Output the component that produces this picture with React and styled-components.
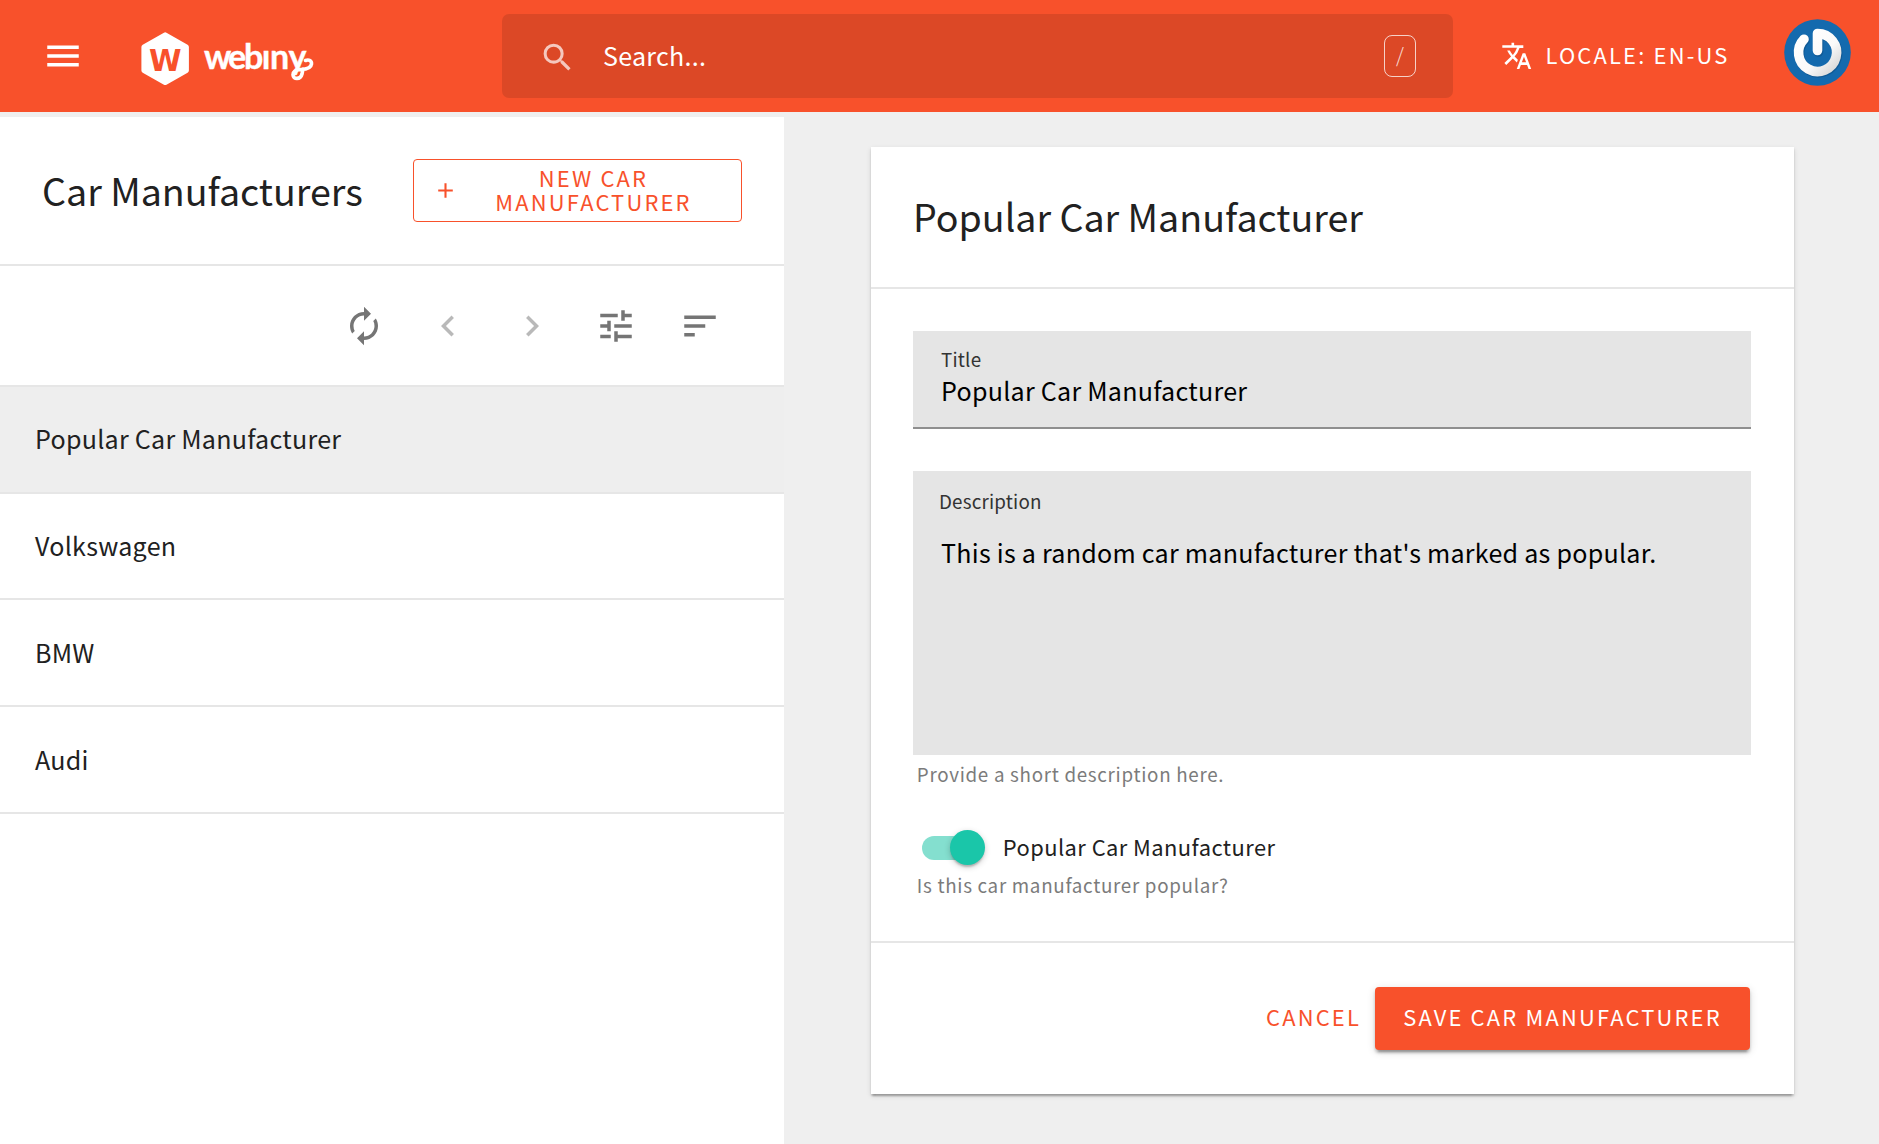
import React from "react";
import styled, { createGlobalStyle, css } from "styled-components";
import {
  MdMenu,
  MdSearch,
  MdTranslate,
  MdAdd,
  MdAutorenew,
  MdChevronLeft,
  MdChevronRight,
  MdTune,
  MdSort,
} from "react-icons/md";

const color = {
  primary: "#f8512b",
  secondary: "#1ac6a9",
  surface: "#ffffff",
  background: "#efefef",
  field: "#e5e5e5",
  line: "#e6e6e6",
  text: "#212121",
  hint: "#7b7b7b",
  icon: "#757575",
};

const GlobalStyle = createGlobalStyle`
  *, *::before, *::after { box-sizing: border-box; }
  body {
    margin: 0;
    background: ${color.background};
    color: ${color.text};
    font-family: "Noto Sans CJK SC", "Noto Sans", sans-serif;
    font-size: 25.07px;
    line-height: 36px;
  }
  svg { display: block; flex: none; }
`;

const buttonText = css`
  font-family: inherit;
  font-size: 21.9px;
  line-height: 24px;
  letter-spacing: 2.19px;
  text-transform: uppercase;
`;

const Page = styled.div`
  height: 1144px;
  display: flex;
  flex-direction: column;
  overflow: hidden;
`;

const TopBar = styled.header`
  flex: none;
  height: 112px;
  display: flex;
  align-items: center;
  padding: 0 28px 0 42px;
  background: ${color.primary};
  color: #fff;
`;

const LogoBox = styled.div`
  width: 180px;
  margin-left: 56px;
`;

const SearchBox = styled.div`
  width: 951px;
  flex: none;
  height: 84px;
  margin-left: 182px;
  padding: 0 37px;
  display: flex;
  align-items: center;
  border-radius: 7px;
  background: rgba(0, 0, 0, 0.108);
`;

const SearchIcon = styled(MdSearch)`
  margin-top: 2px;
  color: rgba(255, 255, 255, 0.7);
`;

const SearchText = styled.span`
  flex: 1;
  margin-left: 27px;
  padding-bottom: 2px;
  letter-spacing: 0.26px;
`;

const KeyHint = styled.span`
  width: 32px;
  height: 42px;
  display: flex;
  align-items: center;
  justify-content: center;
  border: 1px solid rgba(255, 255, 255, 0.75);
  border-radius: 8px;
  color: rgba(255, 255, 255, 0.8);
  font-size: 20px;
  font-weight: 300;
  line-height: 38px;
  padding-bottom: 3px;
`;

const Locale = styled.div`
  ${buttonText}
  display: flex;
  align-items: center;
  width: 283px;
  margin-left: 48px;
  gap: 13px;

  span {
    padding-bottom: 3px;
    white-space: nowrap;
  }
`;

const AvatarBox = styled.div`
  margin-bottom: 7px;
`;

const Workspace = styled.main`
  flex: 1;
  display: flex;
  padding-top: 5px;
`;

const ListPanel = styled.section`
  width: 784px;
  background: ${color.surface};
`;

const ListHeader = styled.div`
  height: 149px;
  padding: 0 42px;
  display: flex;
  align-items: center;
  justify-content: space-between;
  border-bottom: 2px solid ${color.line};
`;

const Heading = styled.h1`
  margin: 0;
  padding-bottom: ${(p) => p.$lift}px;
  font-size: 37.6px;
  font-weight: 400;
  line-height: 56px;
  white-space: nowrap;
`;

const NewButton = styled.button`
  ${buttonText}
  width: 329px;
  height: 63px;
  padding: 0 24px 0 19px;
  display: flex;
  align-items: center;
  border: 1px solid ${color.primary};
  border-radius: 4px;
  background: transparent;
  color: ${color.primary};

  span {
    flex: 1;
    padding: 0 0 1px 12px;
    text-align: center;
  }
`;

const Toolbar = styled.div`
  height: 120.9px;
  padding: 1px 63px 0 0;
  display: flex;
  align-items: center;
  justify-content: flex-end;
  gap: 42px;
  border-bottom: 2px solid ${color.line};
`;

const ToolButton = styled.span`
  color: ${color.icon};
  opacity: ${(p) => (p.$disabled ? 0.5 : 1)};
`;

const List = styled.ul`
  margin: 0;
  padding: 0;
  list-style: none;
`;

const ListItem = styled.li`
  height: 106.75px;
  padding: 0 35px 1.8px;
  display: flex;
  align-items: center;
  border-bottom: 2px solid ${color.line};
  background: ${(p) => (p.$selected ? "#eeeeee" : "transparent")};
  letter-spacing: 0.26px;
`;

const DetailPanel = styled.section`
  flex: 1;
  padding: 30px 85px 0 87px;
`;

const Card = styled.article`
  height: 947px;
  display: flex;
  flex-direction: column;
  background: ${color.surface};
  box-shadow:
    0 3.5px 1.75px -1.75px rgba(0, 0, 0, 0.2),
    0 1.75px 1.75px 0 rgba(0, 0, 0, 0.14),
    0 1.75px 5.25px 0 rgba(0, 0, 0, 0.12);
`;

const CardHeader = styled.div`
  height: 142px;
  padding: 0 42px;
  display: flex;
  align-items: center;
  border-bottom: 2px solid ${color.line};
`;

const CardBody = styled.div`
  flex: 1;
  padding: 42px 43px 0 42px;
`;

const CardFooter = styled.div`
  height: 153px;
  padding: 0 44px;
  display: flex;
  align-items: center;
  justify-content: flex-end;
  border-top: 2px solid ${color.line};
`;

const TextField = styled.div`
  height: 98px;
  padding: 16px 28px 0;
  background: ${color.field};
  border-bottom: 2px solid #8f8f8f;
`;

const TextArea = styled.div`
  height: 284px;
  margin-top: 42px;
  padding: 17.5px 28px 0;
  background: ${color.field};
`;

const FieldLabel = styled.div`
  margin: 0 0 ${(p) => p.$gap}px ${(p) => p.$shift || 0}px;
  font-size: 18.8px;
  line-height: 24px;
  letter-spacing: ${(p) => p.$tracking}px;
  color: #333;
`;

const FieldValue = styled.div`
  color: #000;
  letter-spacing: 0.26px;
  white-space: nowrap;
`;

const HelperText = styled.div`
  margin-top: ${(p) => p.$top}px;
  padding-left: 3.8px;
  font-size: 18.8px;
  line-height: 24px;
  letter-spacing: 0.7px;
  color: ${color.hint};
`;

const SwitchRow = styled.div`
  height: 35px;
  margin-top: 44px;
  padding-left: 9px;
  display: flex;
  align-items: center;
  font-size: 21.9px;
  line-height: 28px;
  letter-spacing: 0.44px;

  span {
    margin-left: 17.8px;
    padding-bottom: 1px;
  }
`;

const SwitchTrack = styled.div`
  width: 63px;
  height: 24px;
  display: flex;
  align-items: center;
  justify-content: flex-end;
  border-radius: 12px;
  background: linear-gradient(90deg, #84dfcf 56px, transparent 56px);
`;

const SwitchThumb = styled.div`
  width: 35px;
  height: 35px;
  flex: none;
  border-radius: 50%;
  background: ${color.secondary};
  box-shadow:
    0 3px 2px -1px rgba(0, 0, 0, 0.2),
    0 2px 6px 0 rgba(0, 0, 0, 0.2);
`;

const TextButton = styled.button`
  ${buttonText}
  height: 63px;
  padding: 0 14px 4px;
  border: 0;
  background: transparent;
  color: ${color.primary};
`;

const SaveButton = styled.button`
  ${buttonText}
  width: 375px;
  height: 63px;
  padding: 0 0 4px;
  border: 0;
  border-radius: 4px;
  background: ${color.primary};
  color: #fff;
  white-space: nowrap;
  box-shadow:
    0 5px 2px -3px rgba(0, 0, 0, 0.2),
    0 3px 3px 0 rgba(0, 0, 0, 0.2),
    0 2px 8px 0 rgba(0, 0, 0, 0.14);
`;

function Logo() {
  return (
    <svg width="180" height="60" viewBox="140 26 180 60" fill="#fff">
      <path
        d="M165.2 35 L186.300 47 V70.600 L165.2 82.500 L144 70.600 V47 Z"
        stroke="#fff"
        strokeWidth="5.2"
        strokeLinejoin="round"
      />
      <text
        x="165.2"
        y="71"
        textAnchor="middle"
        fontFamily="DejaVu Sans"
        fontWeight="700"
        fontSize="29.500"
        fill={color.primary}
      >
        W
      </text>
      <text
        x="204 228 244 261.800 270 288.500"
        y="69"
        fontFamily="Lato"
        fontWeight="700"
        fontSize="34"
        stroke="#fff"
        strokeWidth="0.400"
      >
        webıny
      </text>
      <path
        d="M305.500 60.500 C309 59 311.800 61 311.500 64 C311 68.500 306 69.300 301 69.500 C296 69.700 293 71 293 74.800 C293 79.500 300.500 80 302 74 L303 69"
        fill="none"
        stroke="#fff"
        strokeWidth="3.600"
        strokeLinecap="round"
      />
    </svg>
  );
}

function Avatar() {
  return (
    <svg width="67" height="67" viewBox="0 0 67 67">
      <defs>
        <linearGradient id="ring" x1="0" y1="0" x2="1" y2="1">
          <stop offset="0" stopColor="#fff" />
          <stop offset="0.6" stopColor="#fafafa" />
          <stop offset="1" stopColor="#d5d5d5" />
        </linearGradient>
      </defs>
      <circle cx="33.500" cy="33.500" r="33.300" fill="#146aae" />
      <path
        d="M20 20.200 A19 19 0 1 0 33.500 14.500 V32"
        transform="translate(0.800 1)"
        fill="none"
        stroke="#0b4679"
        strokeOpacity="0.450"
        strokeWidth="10"
        strokeLinecap="round"
        strokeLinejoin="round"
      />
      <path
        d="M20 20.200 A19 19 0 1 0 33.500 14.500 V31.500"
        fill="none"
        stroke="url(#ring)"
        strokeWidth="9.600"
        strokeLinecap="round"
        strokeLinejoin="round"
      />
    </svg>
  );
}

const manufacturers = ["Popular Car Manufacturer", "Volkswagen", "BMW", "Audi"];

export default function App() {
  return (
    <>
      <GlobalStyle />
      <Page>
        <TopBar>
          <MdMenu size={42} />
          <LogoBox>
            <Logo />
          </LogoBox>
          <SearchBox>
            <SearchIcon size={37} />
            <SearchText>Search...</SearchText>
            <KeyHint>/</KeyHint>
          </SearchBox>
          <Locale>
            <MdTranslate size={31.5} />
            <span>Locale: en-US</span>
          </Locale>
          <AvatarBox>
            <Avatar />
          </AvatarBox>
        </TopBar>
        <Workspace>
          <ListPanel>
            <ListHeader>
              <Heading $lift={2}>Car Manufacturers</Heading>
              <NewButton>
                <MdAdd size={25} />
                <span>New Car Manufacturer</span>
              </NewButton>
            </ListHeader>
            <Toolbar>
              <ToolButton>
                <MdAutorenew size={42} />
              </ToolButton>
              <ToolButton $disabled>
                <MdChevronLeft size={42} />
              </ToolButton>
              <ToolButton $disabled>
                <MdChevronRight size={42} />
              </ToolButton>
              <ToolButton>
                <MdTune size={42} />
              </ToolButton>
              <ToolButton>
                <MdSort size={42} />
              </ToolButton>
            </Toolbar>
            <List>
              {manufacturers.map((name, i) => (
                <ListItem key={name} $selected={i === 0}>
                  {name}
                </ListItem>
              ))}
            </List>
          </ListPanel>
          <DetailPanel>
            <Card>
              <CardHeader>
                <Heading $lift={3}>Popular Car Manufacturer</Heading>
              </CardHeader>
              <CardBody>
                <TextField>
                  <FieldLabel $gap={1} $tracking={0.2}>
                    Title
                  </FieldLabel>
                  <FieldValue>Popular Car Manufacturer</FieldValue>
                </TextField>
                <TextArea>
                  <FieldLabel $gap={21} $shift={-2} $tracking={0.2}>
                    Description
                  </FieldLabel>
                  <FieldValue>
                    This is a random car manufacturer that's marked as popular.
                  </FieldValue>
                </TextArea>
                <HelperText $top={7}>Provide a short description here.</HelperText>
                <SwitchRow>
                  <SwitchTrack>
                    <SwitchThumb />
                  </SwitchTrack>
                  <span>Popular Car Manufacturer</span>
                </SwitchRow>
                <HelperText $top={8}>Is this car manufacturer popular?</HelperText>
              </CardBody>
              <CardFooter>
                <TextButton>Cancel</TextButton>
                <SaveButton>Save Car Manufacturer</SaveButton>
              </CardFooter>
            </Card>
          </DetailPanel>
        </Workspace>
      </Page>
    </>
  );
}
